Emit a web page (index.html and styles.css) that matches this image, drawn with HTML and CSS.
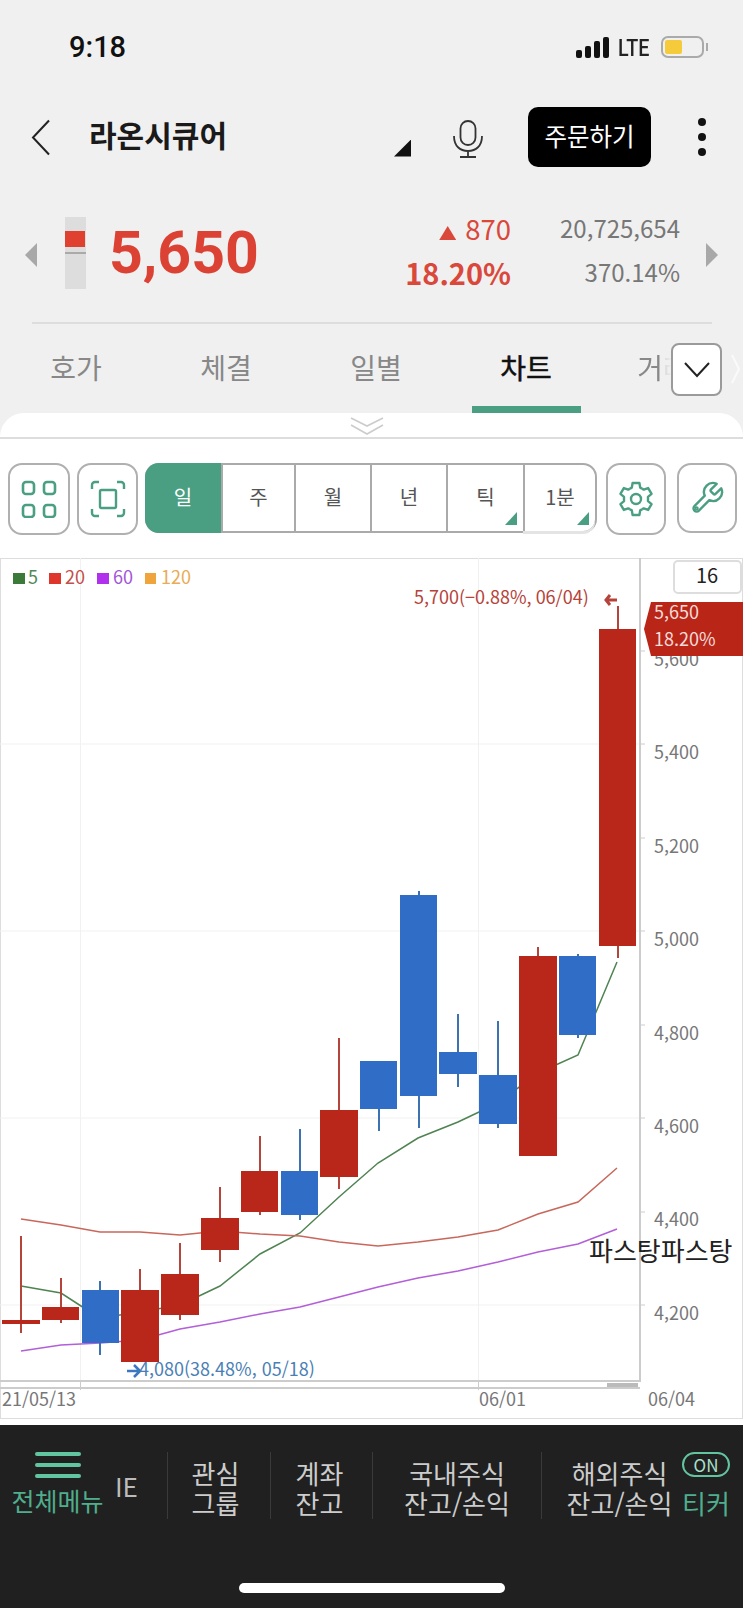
FILE: index.html
```html
<!DOCTYPE html>
<html lang="ko">
<head>
    <meta charset="UTF-8">
    <meta name="viewport" content="width=device-width, initial-scale=1.0">
    <title>라온시큐어 차트</title>
    <link rel="stylesheet" href="styles.css">
</head>
<body>
<div class="screen">

    <div class="status">
        <span class="clock">9:18</span>
        <span class="signal"><i></i><i></i><i></i><i></i></span>
        <span class="net">LTE</span>
        <span class="battery"><i></i></span>
    </div>

    <div class="header">
        <svg class="back" width="20" height="37" viewBox="0 0 20 37"><path d="M18 1.5 2 18.5l16 17" fill="none" stroke="#222" stroke-width="2"/></svg>
        <div class="stock-name">라온시큐어</div>
        <div class="corner"></div>
        <svg class="mic" width="30" height="38" viewBox="0 0 30 38"><rect x="7.5" y="1" width="15" height="24" rx="7.5" fill="none" stroke="#333" stroke-width="1.8"/><path d="M1 16c0 10 6 15 14 15s14-5 14-15M15 31v6M7 37h16" fill="none" stroke="#333" stroke-width="1.8"/></svg>
        <div class="order-btn">주문하기</div>
        <div class="dots"><i></i><i></i><i></i></div>
    </div>

    <div class="price-row">
        <div class="arrow-left"></div>
        <div class="gauge"><div class="gauge-body"></div><div class="gauge-line"></div></div>
        <div class="price">5,650</div>
        <div class="change">
            <div><span class="up-mark"></span>870</div>
            <div class="change-rate">18.20%</div>
        </div>
        <div class="volume">
            <div>20,725,654</div>
            <div>370.14%</div>
        </div>
        <div class="arrow-right"></div>
    </div>

    <div class="divider"></div>

    <div class="tabs">
        <div class="tab"><span>호가</span></div>
        <div class="tab"><span>체결</span></div>
        <div class="tab"><span>일별</span></div>
        <div class="tab tab-on"><span>차트</span></div>
        <div class="tab tab-cut"><span>거래원</span></div>
        <div class="tab-more">
            <svg width="26" height="16" viewBox="0 0 26 16"><path d="M1 1l12 13L25 1" fill="none" stroke="#222" stroke-width="2"/></svg>
        </div>
        <svg class="tab-ghost" width="9" height="30" viewBox="0 0 9 30"><path d="M1 1l7 14-7 14" fill="none" stroke="#fafafa" stroke-width="2"/></svg>
    </div>

    <div class="sheet">
        <div class="handle">
            <svg width="34" height="18" viewBox="0 0 34 18"><path d="M1 1l16 8 16-8M1 8l16 9 16-9" fill="none" stroke="#ccc" stroke-width="1.6"/></svg>
        </div>

        <div class="toolbar">
            <div class="tool">
                <svg width="36" height="38" viewBox="0 0 36 38" fill="none" stroke="#4a9f82" stroke-width="2.6">
                    <rect x="2" y="2" width="11" height="12" rx="3"/><rect x="23" y="2" width="11" height="12" rx="3"/>
                    <rect x="2" y="25" width="11" height="12" rx="3"/><rect x="23" y="25" width="11" height="12" rx="3"/>
                </svg>
            </div>
            <div class="tool tool-b">
                <svg width="36" height="38" viewBox="0 0 36 38" fill="none" stroke="#4a9f82" stroke-width="2.4">
                    <path d="M9 2H5a3 3 0 0 0-3 3v4M27 2h4a3 3 0 0 1 3 3v4M9 36H5a3 3 0 0 1-3-3v-4M27 36h4a3 3 0 0 0 3-3v-4"/>
                    <rect x="10" y="10" width="16" height="18" rx="1.5"/>
                </svg>
            </div>
            <div class="periods">
                <div class="period period-on">일</div>
                <div class="period">주</div>
                <div class="period">월</div>
                <div class="period">년</div>
                <div class="period period-sub">틱</div>
                <div class="period period-sub">1분</div>
            </div>
            <div class="tool tool-c">
                <svg width="36" height="36" viewBox="-18 -18 36 36" fill="none" stroke="#4a9f82" stroke-width="2.4" stroke-linejoin="round">
                    <g id="tooth"><polyline points="-6,-10.4 -4.2,-11.4 -3.4,-16 3.4,-16 4.2,-11.4 6,-10.4"/></g>
                    <use href="#tooth" transform="rotate(60)"/>
                    <use href="#tooth" transform="rotate(120)"/>
                    <use href="#tooth" transform="rotate(180)"/>
                    <use href="#tooth" transform="rotate(240)"/>
                    <use href="#tooth" transform="rotate(300)"/>
                    <circle r="5"/>
                </svg>
            </div>
            <div class="tool tool-d">
                <svg width="36" height="36" viewBox="0 0 24 24" fill="none" stroke="#4a9f82" stroke-width="1.6" stroke-linejoin="round">
                    <path d="M14.7 6.3a1 1 0 0 0 0 1.4l1.6 1.6a1 1 0 0 0 1.4 0l3.77-3.77a6 6 0 0 1-7.94 7.94l-6.91 6.91a2.12 2.12 0 0 1-3-3l6.91-6.91a6 6 0 0 1 7.94-7.94l-3.76 3.76z"/>
                    <circle cx="5.1" cy="18.9" r=".6"/>
                </svg>
            </div>
        </div>

        <div class="chart">
            <svg width="743" height="861" viewBox="0 558 743 861">
                <!-- frame and grid -->
                <rect x="0.5" y="558.5" width="742" height="860" fill="#fff" stroke="#ddd"/>
                <g stroke="#f1f1f1">
                    <path d="M0 744h640M0 931h640M0 1118h640M0 1305h640"/>
                    <path d="M80.500 558v823M478.500 558v823"/>
                </g>
                <g stroke="#ccc">
                    <path d="M640 651h5M640 744h5M640 838h5M640 931h5M640 1025h5M640 1118h5M640 1212h5M640 1305h5"/>
                    <path d="M80.500 1381v9M478.500 1381v9"/>
                </g>
                <rect x="639" y="558" width="2" height="824" fill="#ccc"/>
                <rect x="0" y="1380" width="640" height="2" fill="#ccc"/>
                <rect x="0" y="1387" width="640" height="2" fill="#ccc"/>
                <rect x="607" y="1383" width="31" height="4" fill="#bbb"/>

                <!-- axis labels -->
                <g class="axis">
                    <text x="654" y="666">5,600</text>
                    <text x="654" y="759">5,400</text>
                    <text x="654" y="853">5,200</text>
                    <text x="654" y="946">5,000</text>
                    <text x="654" y="1040">4,800</text>
                    <text x="654" y="1133">4,600</text>
                    <text x="654" y="1226">4,400</text>
                    <text x="654" y="1320">4,200</text>
                    <text x="2" y="1406">21/05/13</text>
                    <text x="479" y="1406">06/01</text>
                    <text x="648" y="1406">06/04</text>
                </g>

                <!-- moving averages -->
                <polyline class="ma ma5" points="21,1286 61,1293 81,1306 100,1318 140,1312 180,1305 199,1296 220,1286 260,1254 300,1233 339,1197 378,1163 418,1138 458,1122 498,1103 538,1073 578,1055 617,962"/>
                <polyline class="ma ma20" points="21,1219 61,1225 100,1232 140,1232 180,1235 220,1231 260,1234 300,1236 339,1242 378,1246 418,1242 458,1237 498,1230 538,1214 578,1202 617,1168"/>
                <polyline class="ma ma60" points="21,1351 61,1345 100,1343 140,1340 180,1329 220,1322 260,1314 300,1307 339,1297 378,1287 418,1278 458,1271 498,1262 538,1252 578,1244 617,1229"/>

                <!-- wicks -->
                <g class="wick-up">
                    <rect x="20" y="1236" width="2" height="97"/>
                    <rect x="60" y="1278" width="2" height="45"/>
                    <rect x="139" y="1269" width="2" height="21"/>
                    <rect x="179" y="1243" width="2" height="77"/>
                    <rect x="219" y="1187" width="2" height="75"/>
                    <rect x="259" y="1136" width="2" height="79"/>
                    <rect x="338" y="1038" width="2" height="151"/>
                    <rect x="537" y="947" width="2" height="9"/>
                    <rect x="617" y="606" width="2" height="352"/>
                </g>
                <g class="wick-down">
                    <rect x="99" y="1281" width="2" height="74"/>
                    <rect x="299" y="1129" width="2" height="91"/>
                    <rect x="378" y="1100" width="2" height="31"/>
                    <rect x="418" y="891" width="2" height="237"/>
                    <rect x="457" y="1014" width="2" height="73"/>
                    <rect x="497" y="1021" width="2" height="107"/>
                    <rect x="577" y="954" width="2" height="84"/>
                </g>

                <!-- candle bodies -->
                <g class="body-up">
                    <rect x="2" y="1320" width="38" height="4"/>
                    <rect x="42" y="1307" width="37" height="13"/>
                    <rect x="121" y="1290" width="38" height="72"/>
                    <rect x="161" y="1274" width="38" height="41"/>
                    <rect x="201" y="1218" width="38" height="32"/>
                    <rect x="241" y="1171" width="37" height="41"/>
                    <rect x="320" y="1110" width="38" height="67"/>
                    <rect x="519" y="956" width="38" height="200"/>
                    <rect x="599" y="629" width="37" height="317"/>
                </g>
                <g class="body-down">
                    <rect x="82" y="1290" width="37" height="53"/>
                    <rect x="281" y="1171" width="37" height="44"/>
                    <rect x="360" y="1061" width="37" height="48"/>
                    <rect x="400" y="895" width="37" height="201"/>
                    <rect x="439" y="1052" width="38" height="22"/>
                    <rect x="479" y="1075" width="38" height="49"/>
                    <rect x="559" y="956" width="37" height="79"/>
                </g>

                <!-- legend -->
                <rect x="13" y="573" width="12" height="11" fill="#3c7a3a"/>
                <text class="lg lg5" x="28" y="584">5</text>
                <rect x="49" y="573" width="12" height="11" fill="#e0352b"/>
                <text class="lg lg20" x="65" y="584">20</text>
                <rect x="97" y="573" width="12" height="11" fill="#b030ee"/>
                <text class="lg lg60" x="113" y="584">60</text>
                <rect x="145" y="573" width="11" height="11" fill="#f0a53c"/>
                <text class="lg lg120" x="161" y="584">120</text>

                <!-- high / low notes -->
                <text class="note-high" x="414" y="604">5,700(−0.88%, 06/04)</text>
                <path d="M617 600h-11m4-5-4 5 4 5" fill="none" stroke="#b5433a" stroke-width="3"/>
                <path d="M127 1371h13m-6-6 6 6-6 6" fill="none" stroke="#3c78c0" stroke-width="2.600"/>
                <text class="note-low" x="139" y="1376">4,080(38.48%, 05/18)</text>

                <!-- period count box -->
                <rect x="674" y="561" width="67" height="32" rx="4" fill="#fff" stroke="#ddd" stroke-width="2"/>
                <text class="count" x="707" y="583">16</text>

                <!-- current price tag -->
                <polygon points="651,602 743,602 743,656 651,656 644,629" fill="#b92618"/>
                <text class="tag" x="654" y="619">5,650</text>
                <text class="tag" x="654" y="646">18.20%</text>

                <text class="overlay-text" x="589" y="1261">파스탕파스탕</text>
            </svg>
        </div>
    </div>

    <div class="nav">
        <div class="nav-items">
            <div class="nav-menu">
                <div class="bars"><i></i><i></i><i></i></div>
                <div class="nav-menu-label">전체메뉴</div>
            </div>
            <div class="nav-cut">IE</div>
            <div class="nav-item w-watch">관심<br>그룹</div>
            <div class="nav-item w-acct">계좌<br>잔고</div>
            <div class="nav-item w-home">국내주식<br>잔고/손익</div>
            <div class="nav-item w-abroad">해외주식<br>잔고/손익</div>
            <div class="nav-ticker">
                <div class="pill">ON</div>
                <div class="nav-ticker-label">티커</div>
            </div>
        </div>
        <div class="home-bar"></div>
    </div>

</div>
</body>
</html>
```

FILE: styles.css
```css
body, html {
    margin: 0;
    padding: 0;
    background: #f0f0f0;
}
.screen {
    width: 743px;
    height: 1608px;
    overflow: hidden;
    display: flex;
    flex-direction: column;
    font-family: "Noto Sans CJK KR", "Noto Sans", sans-serif;
    color: #222;
}

/* status bar */
.status {
    height: 107px;
    box-sizing: border-box;
    padding: 30px 39px 0 69px;
    display: flex;
    align-items: flex-start;
}
.clock {
    font-family: Roboto, sans-serif;
    font-weight: 500;
    font-size: 29px;
    line-height: 34px;
    color: #111;
    margin-right: auto;
}
.signal {
    display: flex;
    align-items: flex-end;
    gap: 3px;
    height: 21px;
    margin-top: 7px;
}
.signal i {
    display: block;
    width: 6px;
    background: #111;
    border-radius: 2px;
}
.signal i:nth-child(1) { height: 8px; }
.signal i:nth-child(2) { height: 12px; }
.signal i:nth-child(3) { height: 17px; }
.signal i:nth-child(4) { height: 21px; }
.net {
    font-family: Roboto, sans-serif;
    font-weight: 500;
    font-size: 24px;
    line-height: 26px;
    color: #222;
    margin-left: 9px;
    margin-top: 5px;
    width: 36px;
    transform: scaleX(.82);
    transform-origin: left center;
}
.battery {
    position: relative;
    width: 43px;
    height: 22px;
    box-sizing: border-box;
    border: 2px solid #aaa;
    border-radius: 7px;
    margin-left: 7px;
    margin-top: 6px;
    padding: 2px;
}
.battery i {
    display: block;
    width: 17px;
    height: 14px;
    background: #f5cb3c;
    border-radius: 2px;
}
.battery::after {
    content: "";
    position: absolute;
    right: -6px;
    top: 5px;
    width: 2px;
    height: 8px;
    background: #aaa;
}

/* stock header */
.header {
    height: 60px;
    display: flex;
    align-items: center;
    padding: 0 37px 0 31px;
}
.stock-name {
    flex: 1;
    margin-left: 38px;
    margin-top: -6px;
    font-size: 30px;
    font-weight: 700;
    line-height: 40px;
    color: #1a1a1a;
}
.corner {
    width: 17px;
    height: 17px;
    margin-top: 22px;
    background: #111;
    clip-path: polygon(100% 0, 100% 100%, 0 100%);
}
.mic {
    margin-left: 42px;
    margin-top: 3px;
}
.order-btn {
    margin-left: 45px;
    width: 123px;
    height: 60px;
    background: #000;
    color: #fff;
    border-radius: 10px;
    font-size: 24.500px;
    line-height: 58px;
    text-align: center;
}
.dots {
    margin-left: 47px;
    display: flex;
    flex-direction: column;
    gap: 7px;
}
.dots i {
    display: block;
    width: 8px;
    height: 8px;
    border-radius: 50%;
    background: #111;
}

/* price row */
.price-row {
    height: 88px;
    margin-top: 39px;
    display: flex;
    align-items: center;
    padding: 0 25px;
}
.arrow-left, .arrow-right {
    width: 12px;
    height: 24px;
    margin-top: 10px;
    background: #a8a8a8;
}
.arrow-left { clip-path: polygon(100% 0, 100% 100%, 0 50%); }
.arrow-right { clip-path: polygon(0 0, 100% 50%, 0 100%); margin-left: 26px; }
.gauge {
    position: relative;
    width: 21px;
    height: 72px;
    margin-left: 28px;
    margin-top: 6px;
    background: #ddd;
}
.gauge-body {
    position: absolute;
    top: 14px;
    left: 0;
    width: 20px;
    height: 16px;
    background: #e0402f;
}
.gauge-line {
    position: absolute;
    top: 35px;
    left: 0;
    width: 21px;
    height: 2px;
    background: #aaa;
}
.price {
    margin-left: 23px;
    margin-top: 6px;
    font-family: Roboto, sans-serif;
    font-weight: 700;
    font-size: 59px;
    line-height: 70px;
    color: #dc4234;
}
.change {
    margin-left: auto;
    text-align: right;
    font-size: 27.500px;
    line-height: 44px;
    color: #d9483b;
}
.up-mark {
    display: inline-block;
    width: 17px;
    height: 14px;
    margin-right: 9px;
    background: #d9483b;
    clip-path: polygon(50% 0, 100% 100%, 0 100%);
}
.change-rate {
    font-size: 29px;
    font-weight: 700;
}
.volume {
    width: 169px;
    text-align: right;
    font-size: 24px;
    line-height: 44px;
    color: #777;
}

.divider {
    height: 2px;
    margin: 28px 31px 0 32px;
    background: #ddd;
}

/* tabs */
.tabs {
    position: relative;
    height: 89px;
    display: flex;
    overflow: hidden;
    font-size: 28px;
    color: #888;
}
.tab {
    width: 150px;
    flex: none;
    display: flex;
    justify-content: center;
    margin-left: 0;
}
.tab:first-child {
    margin-left: 1px;
}
.tab span {
    display: block;
    width: 109px;
    height: 82px;
    padding-top: 23px;
    box-sizing: border-box;
    line-height: 40px;
    text-align: center;
    white-space: nowrap;
}
.tab-on span {
    color: #111;
    -webkit-text-stroke: 0.5px #111;
    border-bottom: 7px solid #4a9f82;
    height: 89px;
}
.tab-cut span {
    -webkit-mask-image: linear-gradient(to right, #000 41px, rgba(0, 0, 0, .2) 43px, transparent 50px);
    mask-image: linear-gradient(to right, #000 41px, rgba(0, 0, 0, .2) 43px, transparent 50px);
}
.tab-more {
    position: absolute;
    left: 671px;
    top: 19px;
    width: 51px;
    height: 53px;
    box-sizing: border-box;
    background: #fff;
    border: 2px solid #9a9a9a;
    border-radius: 8px;
    display: flex;
    align-items: center;
    justify-content: center;
}
.tab-ghost {
    position: absolute;
    left: 731px;
    top: 30px;
}

/* white sheet with the chart */
.sheet {
    flex: 1;
    background: #fff;
    border-radius: 24px 24px 0 0;
    display: flex;
    flex-direction: column;
}
.handle {
    height: 20px;
    border-bottom: 2px solid #ddd;
    display: flex;
    justify-content: center;
    align-items: flex-start;
    padding: 4px 9px 0 0;
}
.toolbar {
    display: flex;
    height: 72px;
    padding: 24px 0 0 8px;
    margin-bottom: 23px;
}
.tool {
    width: 62px;
    height: 72px;
    box-sizing: border-box;
    border: 2.500px solid #b0b0b0;
    border-radius: 14px;
    display: flex;
    align-items: center;
    justify-content: center;
    background: #fff;
}
.tool-b { margin-left: 7px; width: 61px; }
.tool-c { margin-left: 9px; width: 60px; }
.tool-d { margin-left: 11px; width: 60px; height: 70px; }
.periods {
    margin-left: 7px;
    width: 452px;
    height: 70px;
    box-sizing: border-box;
    border: 2px solid #aaa;
    border-radius: 14px;
    display: flex;
}
.period {
    position: relative;
    flex: none;
    width: 76px;
    box-sizing: border-box;
    border-left: 2px solid #aaa;
    font-size: 20px;
    line-height: 64px;
    text-align: center;
    color: #555;
}
.period:nth-child(2) { width: 73px; }
.period:nth-child(5) { width: 77px; }
.period:last-child {
    flex: 1;
    border-radius: 0 0 12px 0;
    box-shadow: 0 3px 0 #e4e4e4;
}
.period-on {
    width: 76px;
    margin: -2px 0 -2px -2px;
    border-left: none;
    border-radius: 14px 0 0 14px;
    background: #4a9f82;
    color: #fff;
    line-height: 68px;
}
.period-sub::after {
    content: "";
    position: absolute;
    right: 6px;
    bottom: 6px;
    width: 12px;
    height: 13px;
    background: #4a9f82;
    clip-path: polygon(100% 0, 100% 100%, 0 100%);
}
.chart {
    height: 861px;
    margin-bottom: 6px;
}
.chart svg {
    display: block;
}
.chart text {
    font-family: "Noto Sans CJK KR", "Noto Sans", sans-serif;
    font-size: 18px;
}
.axis { fill: #777; }
.ma { fill: none; stroke-width: 1.500; }
.ma5 { stroke: #4f8352; }
.ma20 { stroke: #c8675c; }
.ma60 { stroke: #b25fd8; stroke-width: 1.600; }
.wick-up { fill: #b5453a; }
.wick-down { fill: #3c72b0; }
.body-up { fill: #b9271a; }
.body-down { fill: #2f6dc6; }
.lg5 { fill: #4e8a55; }
.lg20 { fill: #c2504a; }
.lg60 { fill: #a455d8; }
.lg120 { fill: #e8ac55; }
.chart .note-high { fill: #b5433a; }
.chart .note-low { fill: #4a7fb5; }
.chart .count { fill: #222; font-size: 20px; text-anchor: middle; }
.chart .tag { fill: #f6dcd8; }
.chart .overlay-text { fill: #222; font-size: 26px; }

/* bottom nav */
.nav {
    height: 183px;
    flex: none;
    background: #202020;
    color: #ccc;
}
.nav-items {
    display: flex;
    padding-top: 27px;
    height: 67px;
    font-size: 26px;
    line-height: 30px;
}
.nav-menu {
    width: 115px;
    flex: none;
    display: flex;
    flex-direction: column;
    align-items: center;
    color: #4fae8c;
    font-size: 25px;
}
.bars {
    display: flex;
    flex-direction: column;
    gap: 7px;
    width: 46px;
}
.bars i {
    display: block;
    height: 4px;
    border-radius: 2px;
    background: #62c5a2;
}
.nav-menu-label {
    margin-top: 7px;
    white-space: nowrap;
}
.nav-cut {
    width: 52px;
    flex: none;
    line-height: 67px;
    color: #bbb;
}
.nav-item {
    flex: none;
    box-sizing: border-box;
    border-left: 1px solid #3a3a3a;
    padding-top: 6px;
    text-align: center;
    white-space: nowrap;
}
.w-watch { width: 103px; padding-right: 7px; }
.w-acct { width: 102px; padding-right: 4px; }
.w-home { width: 169px; }
.w-abroad { width: 140px; padding-left: 16px; }
.nav-ticker {
    width: 50px;
    flex: none;
    display: flex;
    flex-direction: column;
    align-items: center;
    color: #4fae8c;
}
.pill {
    width: 48px;
    height: 25px;
    box-sizing: border-box;
    border: 2px solid #62c5a2;
    border-radius: 13px;
    font-size: 17px;
    line-height: 21px;
    text-align: center;
    color: #a9e0cb;
}
.nav-ticker-label {
    margin-top: 11px;
}
.home-bar {
    width: 266px;
    height: 10px;
    margin: 64px auto 0 239px;
    background: #fff;
    border-radius: 5px;
}
```
